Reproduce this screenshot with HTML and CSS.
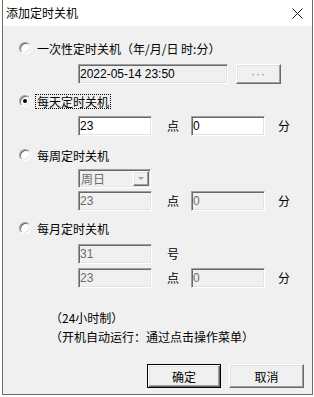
FILE: index.html
```html
<!DOCTYPE html>
<html lang="zh-CN">
<head>
<meta charset="utf-8">
<title>添加定时关机</title>
<link rel="stylesheet" href="styles.css">
</head>
<body>
<div class="window">
  <div class="titlebar">
    <span class="title">添加定时关机</span>
    <svg class="close" width="11" height="11" viewBox="0 0 11 11"><path d="M0.5 0.5 L10.5 10.5 M10.5 0.5 L0.5 10.5" stroke="#1a1a1a" stroke-width="1" fill="none"/></svg>
  </div>
  <div class="client">
    <div class="opt opt1"><span class="radio"></span><span class="lbl">一次性定时关机（年/月/日 时:分）</span></div>
    <div class="row row1">
      <div class="field wide readonly">2022-05-14 23:50</div>
      <div class="btn dots">···</div>
    </div>

    <div class="opt opt2"><span class="radio checked"></span><span class="lbl focus">每天定时关机</span></div>
    <div class="row row2">
      <div class="field">23</div>
      <span class="unit dian">点</span>
      <div class="field">0</div>
      <span class="unit fen">分</span>
    </div>

    <div class="opt opt3"><span class="radio"></span><span class="lbl">每周定时关机</span></div>
    <div class="row combo-row">
      <div class="combo"><span class="combo-text">周日</span><span class="combo-btn"><span class="tri"></span></span></div>
    </div>
    <div class="row row3">
      <div class="field disabled">23</div>
      <span class="unit dian">点</span>
      <div class="field disabled">0</div>
      <span class="unit fen">分</span>
    </div>

    <div class="opt opt4"><span class="radio"></span><span class="lbl">每月定时关机</span></div>
    <div class="row row31">
      <div class="field disabled">31</div>
      <span class="unit dian">号</span>
    </div>
    <div class="row row4">
      <div class="field disabled">23</div>
      <span class="unit dian">点</span>
      <div class="field disabled">0</div>
      <span class="unit fen">分</span>
    </div>

    <div class="note note1">（24小时制）</div>
    <div class="note note2">（开机自动运行：通过点击操作菜单）</div>

    <div class="buttons">
      <div class="btn push default">确定</div>
      <div class="btn push cancel">取消</div>
    </div>
  </div>
</div>
</body>
</html>
```
FILE: styles.css
```css
body {
  margin: 0;
  background: #ffffff;
  font-family: "Noto Sans CJK SC", sans-serif;
  font-size: 12px;
  color: #000;
}

.window {
  margin-left: 2px;
  width: 311px;
  height: 395px;
  box-sizing: border-box;
  border: 1px solid #6c6c6c;
  border-top: none;
  background: #f0f0f0;
  display: flex;
  flex-direction: column;
}

.titlebar {
  flex: none;
  height: 26px;
  background: #fff;
  display: flex;
  align-items: center;
  justify-content: space-between;
  padding: 0 9px 0 3px;
}

.title {
  font-size: 12px;
  line-height: 16px;
  color: #000;
}

.close {
  display: block;
}

.client {
  flex: 1;
  display: flex;
  flex-direction: column;
  padding-left: 16px;
}

.opt {
  display: flex;
  align-items: center;
  height: 14px;
}

.opt1 { margin-top: 15px; }
.opt2 { margin-top: 10px; }
.opt3 { margin-top: 12px; }
.opt4 { margin-top: 10px; }

.radio {
  position: relative;
  width: 12px;
  height: 12px;
  box-sizing: border-box;
  border-radius: 50%;
  border: 1px solid;
  border-color: #a0a0a0 #ffffff #ffffff #a0a0a0;
  box-shadow: inset 1px 1px #696969, inset -1px -1px #e3e3e3;
  background: #fff;
  margin-right: 4px;
  flex: none;
}

.radio.checked::after {
  content: "";
  position: absolute;
  left: 3px;
  top: 3px;
  width: 4px;
  height: 4px;
  border-radius: 50%;
  background: #000;
}

.lbl {
  line-height: 13px;
  padding: 0 1px;
  border: 1px dotted transparent;
  white-space: nowrap;
}

.lbl.focus {
  border-color: #000;
}

.row {
  display: flex;
  align-items: center;
  margin-left: 59px;
}

.row1 { margin-top: 9px; }
.row2 { margin-top: 8px; }
.combo-row { margin-top: 7px; }
.row3 { margin-top: 3px; }
.row31 { margin-top: 9px; }
.row4 { margin-top: 4px; }

.field {
  width: 74px;
  height: 20px;
  box-sizing: border-box;
  border: 1px solid;
  border-color: #a0a0a0 #ffffff #ffffff #a0a0a0;
  box-shadow: inset 1px 1px #696969, inset -1px -1px #e3e3e3;
  background: #fff;
  font-family: "Liberation Sans", sans-serif;
  font-size: 12px;
  line-height: 16px;
  padding: 1px 1px;
  white-space: nowrap;
}

.field.wide {
  width: 150px;
}

.field.readonly {
  background: #f0f0f0;
  color: #000;
}

.field.disabled {
  background: #f0f0f0;
  color: #6d6d6d;
}

.unit {
  width: 12px;
  line-height: 14px;
  flex: none;
}

.unit.dian {
  margin-left: 15px;
  margin-right: 12px;
}

.unit.fen {
  margin-left: 13px;
}

.btn {
  box-sizing: border-box;
  display: flex;
  align-items: center;
  justify-content: center;
  background: #f0f0f0;
  border: 1px solid;
  border-color: #ffffff #696969 #696969 #ffffff;
  box-shadow: inset -1px -1px #a0a0a0, inset 1px 1px #e3e3e3;
}

.btn.dots {
  width: 45px;
  height: 20px;
  margin-left: 8px;
  color: #8a8a8a;
  font-family: "Liberation Sans", sans-serif;
  font-size: 12px;
  letter-spacing: 1px;
}

.combo {
  width: 73px;
  height: 19px;
  box-sizing: border-box;
  border: 1px solid;
  border-color: #a0a0a0 #ffffff #ffffff #a0a0a0;
  box-shadow: inset 1px 1px #696969, inset -1px -1px #e3e3e3;
  background: #f0f0f0;
  display: flex;
  align-items: center;
  justify-content: space-between;
  padding: 1px 1px 1px 2px;
  color: #6d6d6d;
}

.combo-text {
  line-height: 14px;
}

.combo-btn {
  width: 16px;
  height: 15px;
  box-sizing: border-box;
  border: 1px solid;
  border-color: #ffffff #696969 #696969 #ffffff;
  box-shadow: inset -1px -1px #a0a0a0, inset 1px 1px #e3e3e3;
  display: flex;
  align-items: center;
  justify-content: center;
}

.tri {
  width: 0;
  height: 0;
  border-left: 3px solid transparent;
  border-right: 3px solid transparent;
  border-top: 3px solid #a0a0a0;
}

.note {
  margin-left: 31px;
  line-height: 18px;
  white-space: nowrap;
}

.note1 { margin-top: 21px; }
.note2 { margin-top: 1px; }

.buttons {
  display: flex;
  margin-top: 18px;
  margin-left: 128px;
  gap: 8px;
}

.btn.push {
  height: 24px;
  width: 74px;
  font-size: 12px;
}

.btn.cancel {
  width: 75px;
}

.btn.default {
  border: 1px solid #000;
  box-shadow: inset 1px 1px #ffffff, inset -1px -1px #696969, inset -2px -2px #a0a0a0, inset 2px 2px #e3e3e3;
}
```
